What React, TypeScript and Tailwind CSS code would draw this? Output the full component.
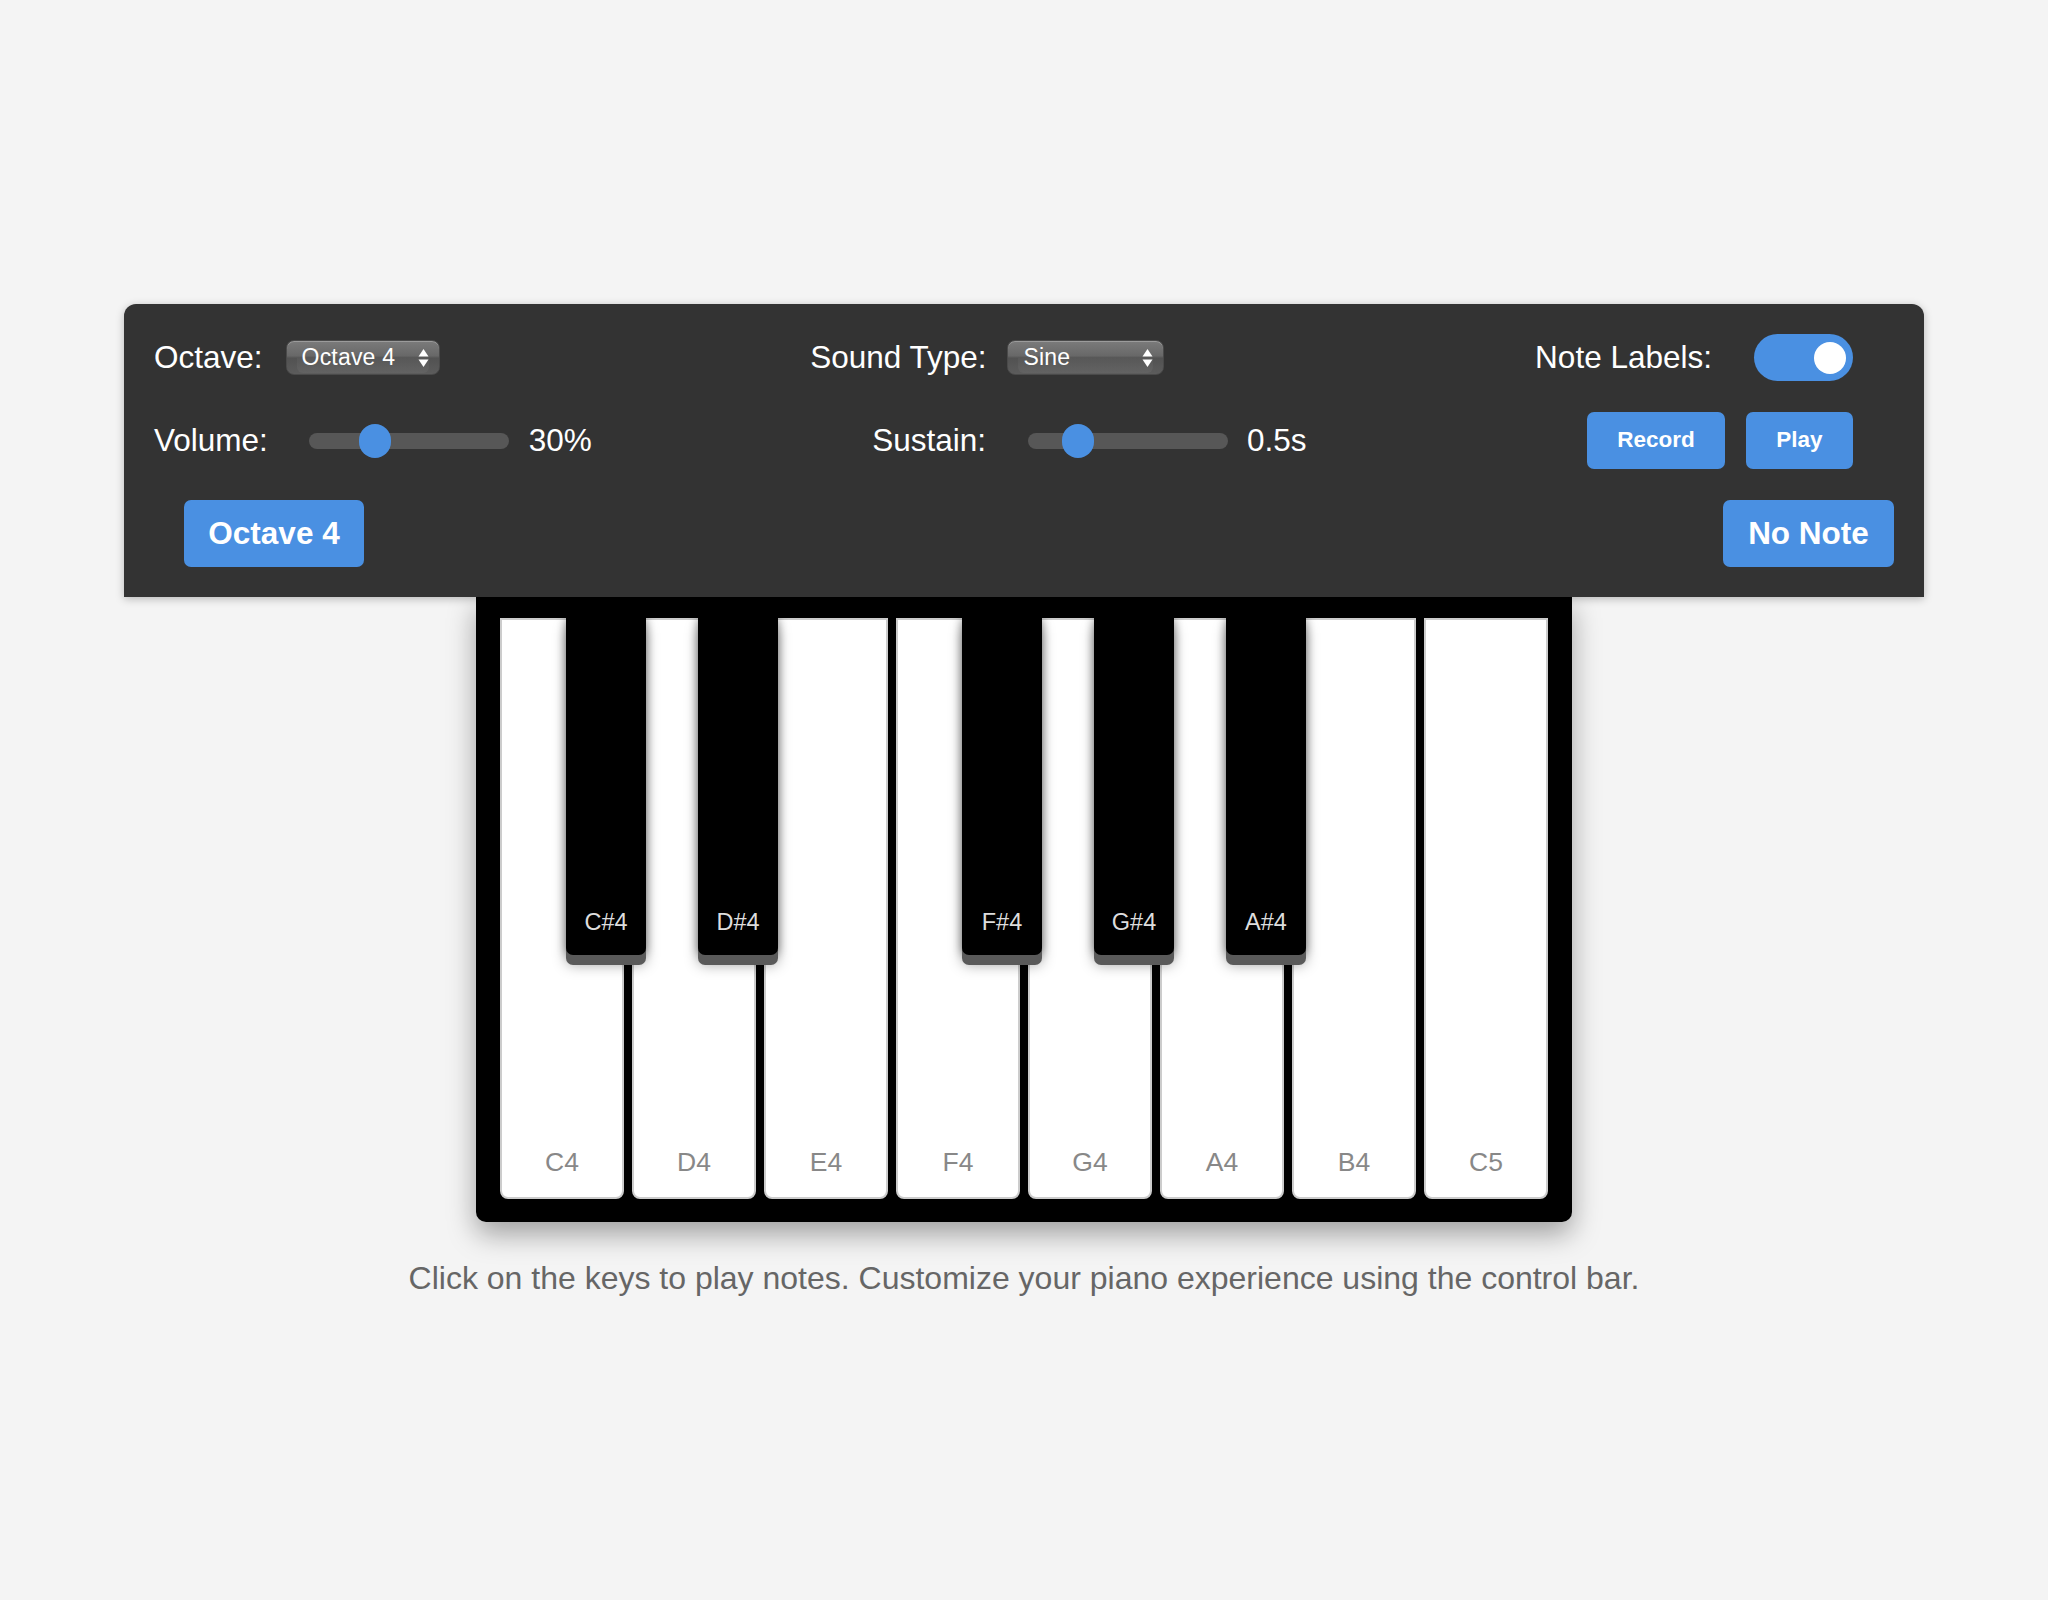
import React from "react";

const whiteNotes = ["C4", "D4", "E4", "F4", "G4", "A4", "B4", "C5"];
const blackKeys = [
  { n: "C#4", cls: "left-[70px]" },
  { n: "D#4", cls: "left-[202px]" },
  { n: "F#4", cls: "left-[466px]" },
  { n: "G#4", cls: "left-[598px]" },
  { n: "A#4", cls: "left-[730px]" },
];

function Arrows() {
  return (
    <svg width="11" height="20" viewBox="0 0 11 20" className="shrink-0">
      <path d="M5.5 1 L10.5 8.5 L0.5 8.5 Z" fill="#fff" />
      <path d="M5.5 19 L10.5 11.5 L0.5 11.5 Z" fill="#fff" />
    </svg>
  );
}

function FakeSelect({ value, width }: { value: string; width: string }) {
  return (
    <div
      className={`relative ${width} h-[35px] rounded-[8px] border border-[#4a4a4a] bg-[linear-gradient(to_bottom,#7b7b7b_0%,#686868_45%,#525252_52%,#5c5c5c_100%)] shadow-[inset_0_1px_0_rgba(255,255,255,0.25)] flex items-center justify-between pl-[15px] pr-[10px]`}
    >
      <div className="absolute left-[10px] right-[10px] bottom-[1px] top-[17px] rounded-b-[6px] bg-[linear-gradient(to_bottom,#5a5a5a,#666666)] opacity-70" />
      <span className="relative text-white text-[23px] leading-none tracking-[0.2px]">{value}</span>
      <span className="relative"><Arrows /></span>
    </div>
  );
}

function Slider({ pct }: { pct: number }) {
  return (
    <div className="relative w-[200px] h-[16px] rounded-full bg-[#575757]">
      <div
        className="absolute top-1/2 -translate-y-1/2 w-[32px] h-[34px] rounded-full bg-[#4a90e2]"
        style={{ left: `${(pct / 100) * 168}px` }}
      />
    </div>
  );
}

export default function App() {
  return (
    <div className="min-h-[1600px] w-full bg-[#f4f4f4] flex flex-col items-center justify-center font-['Liberation_Sans',Arial,Helvetica,sans-serif]">
      {/* Control panel */}
      <div className="relative z-10 w-[1800px] bg-[#333333] rounded-t-[12px] shadow-[0_2px_8px_rgba(0,0,0,0.25)] px-[30px] py-[30px] flex flex-col gap-[31px] text-white">
        {/* Row 1 */}
        <div className="flex items-center justify-between pr-[41px] h-[47px]">
          <div className="flex items-center gap-[23px]">
            <span className="text-[31.5px] leading-none">Octave:</span>
            <FakeSelect value="Octave 4" width="w-[154px]" />
          </div>
          <div className="flex items-center gap-[21px]">
            <span className="text-[31.5px] leading-none">Sound Type:</span>
            <FakeSelect value="Sine" width="w-[157px]" />
          </div>
          <div className="flex items-center gap-[42px]">
            <span className="text-[31.5px] leading-none">Note Labels:</span>
            <div className="relative w-[99px] h-[47px] rounded-full bg-[#4a90e2]">
              <div className="absolute right-[7px] top-[7.5px] w-[32px] h-[32px] rounded-full bg-white" />
            </div>
          </div>
        </div>
        {/* Row 2 */}
        <div className="flex items-center justify-between pr-[41px] h-[57px]">
          <div className="flex items-center">
            <span className="text-[31.5px] leading-none mr-[41px]">Volume:</span>
            <Slider pct={30} />
            <span className="text-[31.5px] leading-none ml-[20px]">30%</span>
          </div>
          <div className="flex items-center">
            <span className="text-[31.5px] leading-none mr-[42px]">Sustain:</span>
            <Slider pct={20} />
            <span className="text-[31.5px] leading-none ml-[19px]">0.5s</span>
          </div>
          <div className="flex items-center gap-[21px]">
            <button className="h-[57px] w-[138px] rounded-[7px] bg-[#4a90e2] text-white font-bold text-[22.5px] leading-none">
              Record
            </button>
            <button className="h-[57px] w-[107px] rounded-[7px] bg-[#4a90e2] text-white font-bold text-[22.5px] leading-none">
              Play
            </button>
          </div>
        </div>
        {/* Row 3 */}
        <div className="flex items-center justify-between pl-[30px] h-[67px]">
          <div className="h-[67px] w-[180px] rounded-[7px] bg-[#4a90e2] flex items-center justify-center text-white font-bold text-[31.5px] leading-none">
            Octave 4
          </div>
          <div className="h-[67px] w-[171px] rounded-[7px] bg-[#4a90e2] flex items-center justify-center text-white font-bold text-[31.5px] leading-none">
            No Note
          </div>
        </div>
      </div>

      {/* Piano */}
      <div className="w-[1096px] bg-black rounded-b-[10px] shadow-[0_12px_28px_rgba(0,0,0,0.35)] px-[20px] pt-[21px] pb-[23px]">
        <div className="relative flex">
          {whiteNotes.map((n) => (
            <div
              key={n}
              className="mx-[4px] w-[124px] h-[581px] bg-white border-2 border-[#cccccc] rounded-b-[8px] flex items-end justify-center pb-[20px]"
            >
              <span className="text-[26.5px] leading-[30px] text-[#888888]">{n}</span>
            </div>
          ))}
          {blackKeys.map((b) => (
            <div
              key={b.n}
              className={`absolute top-0 ${b.cls} w-[80px] h-[337px] bg-black rounded-b-[7px] shadow-[0_10px_0_#5a5a5a,0_10px_14px_rgba(0,0,0,0.35),0_0_10px_rgba(0,0,0,0.45)] flex items-end justify-center pb-[19px]`}
            >
              <span className="text-[23.5px] leading-[27px] text-[#dddddd]">{b.n}</span>
            </div>
          ))}
        </div>
      </div>

      <p className="mt-[38px] text-[32px] leading-[36px] text-[#666666]">
        Click on the keys to play notes. Customize your piano experience using the control bar.
      </p>
    </div>
  );
}
